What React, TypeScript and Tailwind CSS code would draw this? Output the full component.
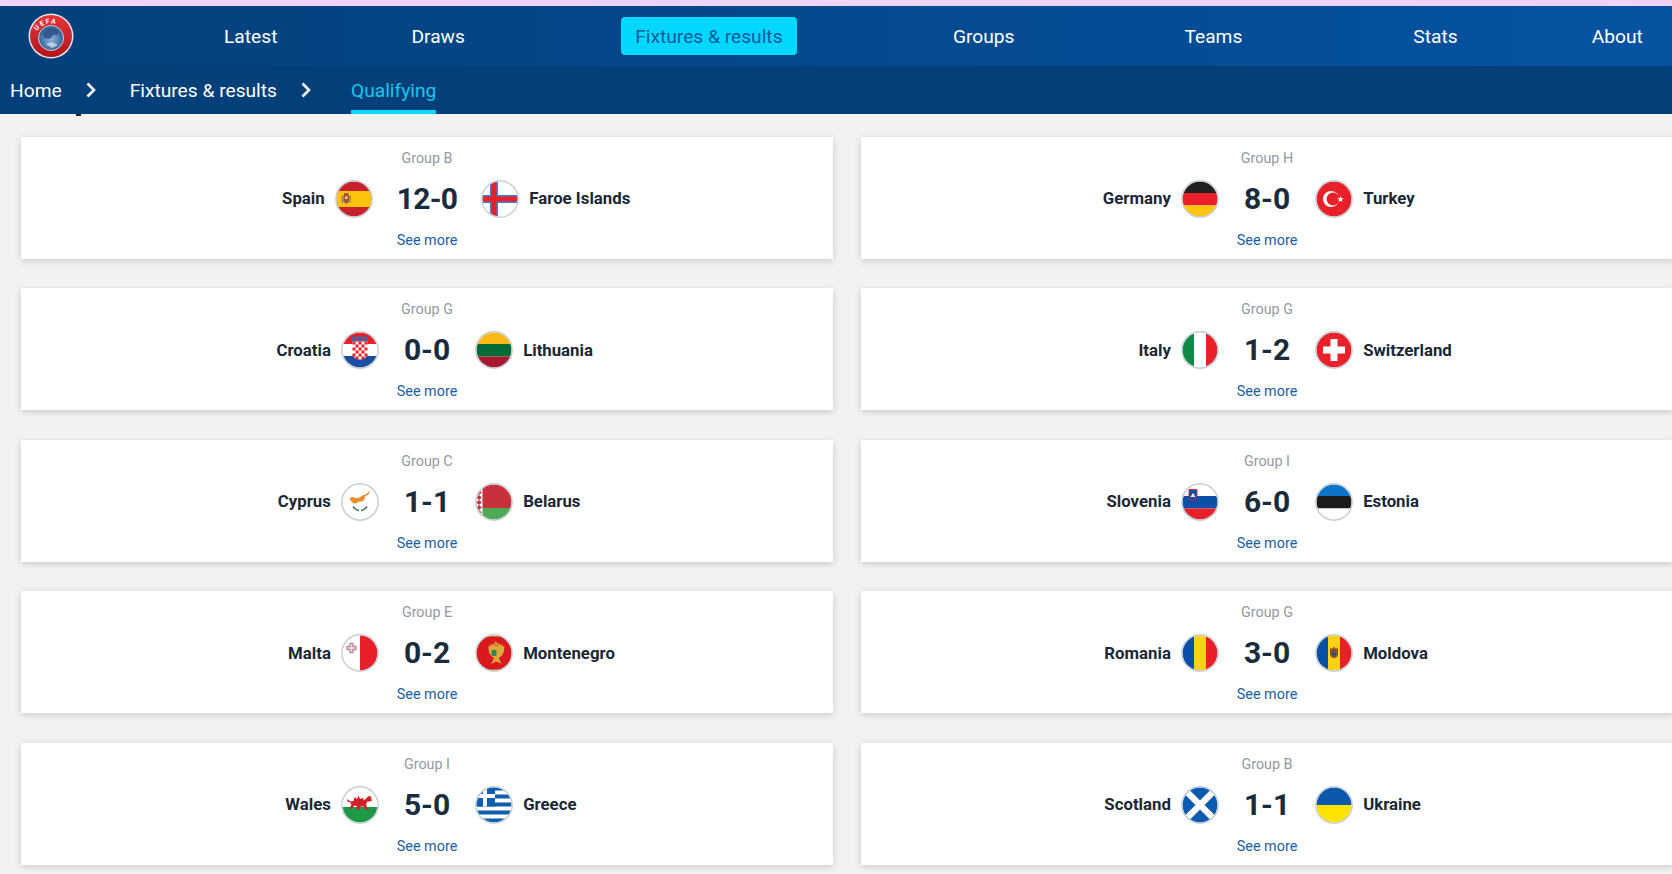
import React from "react";

const RED = "#e8202a";

function Flag({ id, children, ring = "#c6ced6" }: { id: string; children: React.ReactNode; ring?: string }) {
  return (
    <svg width="38" height="38" viewBox="0 0 38 38" className="shrink-0 block">
      <defs>
        <clipPath id={id}>
          <circle cx="19" cy="19" r="17.5" />
        </clipPath>
      </defs>
      <circle cx="19" cy="19" r="18.5" fill="#fff" />
      <g clipPath={`url(#${id})`}>{children}</g>
      <circle cx="19" cy="19" r="18.2" fill="none" stroke={ring} strokeWidth="1.4" />
    </svg>
  );
}

function R({ x, y, w, h, f }: { x: number; y: number; w: number; h: number; f: string }) {
  return <rect x={x} y={y} width={w} height={h} fill={f} />;
}

const flags: Record<string, React.ReactNode> = {
  Spain: (
    <>
      <R x={0} y={0} w={38} h={38} f="#c8202c" />
      <R x={0} y={11} w={38} h={16} f="#fcc30b" />
      <rect x="8.5" y="15" width="5.5" height="7" rx="1" fill="#a8502c" />
      <rect x="10" y="16.5" width="2.5" height="2.5" fill="#e8d9a0" />
      <rect x="6.8" y="15.5" width="1.2" height="7.5" fill="#8a7a60" />
      <rect x="14.5" y="15.5" width="1.2" height="7.5" fill="#8a7a60" />
      <rect x="9" y="13" width="4.5" height="2" fill="#b0602a" />
      <rect x="9.5" y="22" width="3.5" height="1.5" fill="#8a6a50" />
    </>
  ),
  "Faroe Islands": (
    <>
      <R x={0} y={0} w={38} h={38} f="#fff" />
      <R x={9} y={0} w={8} h={38} f="#3d7fd0" />
      <R x={0} y={15} w={38} h={8} f="#3d7fd0" />
      <R x={10.5} y={0} w={5} h={38} f={RED} />
      <R x={0} y={16.5} w={38} h={5} f={RED} />
    </>
  ),
  Germany: (
    <>
      <R x={0} y={0} w={38} h={13} f="#231f20" />
      <R x={0} y={13} w={38} h={12.5} f={RED} />
      <R x={0} y={25.5} w={38} h={13} f="#ffc60b" />
    </>
  ),
  Turkey: (
    <>
      <R x={0} y={0} w={38} h={38} f={RED} />
      <circle cx="16" cy="19" r="8" fill="#fff" />
      <circle cx="18" cy="19" r="6.4" fill={RED} />
      <polygon
        points="25.5,15.8 26.3,18.2 28.8,18.2 26.8,19.7 27.5,22.1 25.5,20.7 23.5,22.1 24.2,19.7 22.2,18.2 24.7,18.2"
        fill="#fff"
      />
    </>
  ),
  Croatia: (
    <>
      <R x={0} y={0} w={38} h={13} f={RED} />
      <R x={0} y={13} w={38} h={12} f="#fff" />
      <R x={0} y={25} w={38} h={13} f="#1b4ea3" />
      <rect x="11" y="5.5" width="16" height="5" fill="#3a64b0" />
      <rect x="14" y="6.5" width="3" height="3" fill="#b83a3a" />
      <rect x="21" y="6.5" width="3" height="3" fill="#b83a3a" />
      <path d="M11.5 10.5h15v12a7.5 6 0 0 1-15 0z" fill="#fff" />
      {[0, 1, 2, 3, 4, 5].map((r) =>
        [0, 1, 2, 3, 4].map((c) =>
          (r + c) % 2 === 0 ? (
            <rect
              key={`${r}-${c}`}
              x={11.5 + c * 3}
              y={10.5 + r * 3}
              width={3}
              height={3}
              fill={r === 5 && (c === 0 || c === 4) ? "#fff" : RED}
            />
          ) : null
        )
      )}
    </>
  ),
  Lithuania: (
    <>
      <R x={0} y={0} w={38} h={13} f="#fdb913" />
      <R x={0} y={13} w={38} h={12.5} f="#046a38" />
      <R x={0} y={25.5} w={38} h={13} f="#a6192e" />
    </>
  ),
  Italy: (
    <>
      <R x={0} y={0} w={13} h={38} f="#0f8a46" />
      <R x={13} y={0} w={12} h={38} f="#fff" />
      <R x={25} y={0} w={13} h={38} f={RED} />
    </>
  ),
  Switzerland: (
    <>
      <R x={0} y={0} w={38} h={38} f={RED} />
      <R x={15.5} y={8} w={7} h={22} f="#fff" />
      <R x={8} y={15.5} w={22} h={7} f="#fff" />
    </>
  ),
  Cyprus: (
    <>
      <R x={0} y={0} w={38} h={38} f="#fff" />
      <path
        d="M8.5 15l3.5-1 3 1.2 4-1 2.2-1.6 3.3-1.2 5-3.8-2.4 4.1-3 1.6-.5 3-2.5 2.2-3.5.2-2 1.6-3 .2-2.8-2.5z"
        fill="#ea8f2e"
      />
      <path d="M12 23.5c2 3 4 3.8 6 4M26 23.5c-2 3-4 3.8-6 4" stroke="#5d8a5f" strokeWidth="1.8" fill="none" />
    </>
  ),
  Belarus: (
    <>
      <R x={0} y={0} w={38} h={25} f="#c8303c" />
      <R x={0} y={25} w={38} h={13} f="#4faa58" />
      <R x={0} y={0} w={7.5} h={38} f="#fff" />
      {[2, 7, 12, 17, 22, 27, 32].map((y) => (
        <polygon key={y} points={`4,${y} 6.8,${y + 2.5} 4,${y + 5} 1.2,${y + 2.5}`} fill="#c8303c" />
      ))}
    </>
  ),
  Slovenia: (
    <>
      <R x={0} y={0} w={38} h={13} f="#fff" />
      <R x={0} y={13} w={38} h={12.5} f="#0a50a8" />
      <R x={0} y={25.5} w={38} h={13} f={RED} />
      <path d="M8 6.5h8v6.5c0 2.6-2.2 4-4 5-1.8-1-4-2.4-4-5z" fill="#0a50a8" stroke={RED} strokeWidth="0.9" />
      <path d="M9.5 14l2.5-4 2.5 4z" fill="#fff" />
    </>
  ),
  Estonia: (
    <>
      <R x={0} y={0} w={38} h={13} f="#0a75c9" />
      <R x={0} y={13} w={38} h={12.5} f="#1c1c1e" />
      <R x={0} y={25.5} w={38} h={13} f="#fff" />
    </>
  ),
  Malta: (
    <>
      <R x={0} y={0} w={19} h={38} f="#fff" />
      <R x={19} y={0} w={19} h={38} f={RED} />
      <path d="M9 9.5h3v3h3v3h-3v3H9v-3H6v-3h3z" fill="#ecdfe2" stroke="#b98a92" strokeWidth="1.3" />
    </>
  ),
  Montenegro: (
    <>
      <R x={0} y={0} w={38} h={38} f="#d4af37" />
      <R x={0} y={2.5} w={38} h={33} f="#d9191f" />
      <path
        d="M19 6.5l1.4 2.5-.8 2 1.4 1.2 3.2-3.2 1 2.4 2-1.6.6 2.6 1.7-.6-.6 6-2 4-3 2 1 3 2 3-3-1-1-1h-3l-1 1-3 1 2-3 1-3-3-2-2-4-.6-6 1.7.6.6-2.6 2 1.6 1-2.4 3.2 3.2 1.4-1.2-.8-2z"
        fill="#dba93a"
      />
      <rect x="16.5" y="16" width="5" height="6" rx="1" fill="#3b7d5a" />
    </>
  ),
  Romania: (
    <>
      <R x={0} y={0} w={13} h={38} f="#0a4fa6" />
      <R x={13} y={0} w={12} h={38} f="#fcd116" />
      <R x={25} y={0} w={13} h={38} f={RED} />
    </>
  ),
  Moldova: (
    <>
      <R x={0} y={0} w={13} h={38} f="#0a4fa6" />
      <R x={13} y={0} w={12} h={38} f="#fcd116" />
      <R x={25} y={0} w={13} h={38} f={RED} />
      <path d="M15 13.5l2 1.5 2-2.5 2 2.5 2-1.5v7c0 2.2-2 3.2-4 4-2-.8-4-1.8-4-4z" fill="#7a5a2b" />
      <rect x="17" y="15.5" width="4" height="3" fill="#b8332f" />
      <rect x="17" y="18.5" width="4" height="3" fill="#2a4f9c" />
    </>
  ),
  Wales: (
    <>
      <R x={0} y={0} w={38} h={21} f="#fff" />
      <R x={0} y={21} w={38} h={17} f="#1c9a46" />
      <path
        d="M6 13l3.5 2.5 3-.5 1-4 2.5 2 1.5-3.5 1.5 3.5 3-1 1 2.5 3-3 2-1.5 2.5.8-.5 2 1.5 1.5-3 1.5-2-.5-1.5 3.5 1.5 3.5 2 1.5h-4l-2-3.5-3 .5-1 3h-3.5l1.5-3-3-1.2-2.5 3-3 .2 2.5-4-1.5-2.5-2.5-.5z"
        fill="#d2202a"
      />
    </>
  ),
  Greece: (
    <>
      <R x={0} y={0} w={38} h={38} f="#fff" />
      {[0, 8, 16, 24, 32].map((y) => (
        <R key={y} x={0} y={y + 0.5} w={38} h={4} f="#0d5eaf" />
      ))}
      <R x={0} y={0} w={20} h={20.5} f="#0d5eaf" />
      <R x={8} y={0} w={4} h={20.5} f="#fff" />
      <R x={0} y={8} w={20} h={4} f="#fff" />
    </>
  ),
  Scotland: (
    <>
      <R x={0} y={0} w={38} h={38} f="#0b5cb0" />
      <path d="M4 4l30 30M34 4L4 34" stroke="#fff" strokeWidth="6.5" />
    </>
  ),
  Ukraine: (
    <>
      <R x={0} y={0} w={38} h={19} f="#0a57ab" />
      <R x={0} y={19} w={38} h={19} f="#fde300" />
    </>
  ),
};

type Match = { g: string; h: string; s: string; a: string };

const left: Match[] = [
  { g: "Group B", h: "Spain", s: "12-0", a: "Faroe Islands" },
  { g: "Group G", h: "Croatia", s: "0-0", a: "Lithuania" },
  { g: "Group C", h: "Cyprus", s: "1-1", a: "Belarus" },
  { g: "Group E", h: "Malta", s: "0-2", a: "Montenegro" },
  { g: "Group I", h: "Wales", s: "5-0", a: "Greece" },
];
const right: Match[] = [
  { g: "Group H", h: "Germany", s: "8-0", a: "Turkey" },
  { g: "Group G", h: "Italy", s: "1-2", a: "Switzerland" },
  { g: "Group I", h: "Slovenia", s: "6-0", a: "Estonia" },
  { g: "Group G", h: "Romania", s: "3-0", a: "Moldova" },
  { g: "Group B", h: "Scotland", s: "1-1", a: "Ukraine" },
];

function Card({ m }: { m: Match }) {
  const wide = m.s === "12-0";
  return (
    <div className="h-[122px] bg-white shadow-[0_2px_7px_rgba(0,0,0,0.16)] flex flex-col items-center">
      <div className="mt-[12px] h-[19px] leading-[19px] text-[14.3px] text-[#8f9aa3]">{m.g}</div>
      <div className="mt-[11px] h-[40px] w-full flex items-center">
        <div className="flex-1 flex justify-end items-center gap-[10px]">
          <span className="text-[16.8px] font-bold text-[#1a2733]">{m.h}</span>
          <Flag id={`h-${m.h.replace(/\s/g, "")}`}>{flags[m.h]}</Flag>
        </div>
        <div
          className={
            wide
              ? "mx-[24px] tracking-[-0.7px] text-[30px] leading-[40px] font-bold text-[#1a2b3c]"
              : "mx-[25px] text-[30px] leading-[40px] font-bold text-[#1a2b3c]"
          }
        >
          {m.s}
        </div>
        <div className="flex-1 flex items-center gap-[10px]">
          <Flag id={`a-${m.a.replace(/\s/g, "")}`}>{flags[m.a]}</Flag>
          <span className="text-[16.8px] font-bold text-[#1a2733]">{m.a}</span>
        </div>
      </div>
      <a className="mt-[12px] h-[19px] leading-[19px] text-[14.4px] text-[#1560a8]">See more</a>
    </div>
  );
}

function Chevron() {
  return (
    <svg width="14" height="18" viewBox="0 0 14 18" className="shrink-0">
      <path d="M3.5 2.5L10 9l-6.5 6.5" fill="none" stroke="#fff" strokeWidth="2.6" />
    </svg>
  );
}

function Logo() {
  return (
    <svg width="46" height="48" viewBox="0 0 46 48" className="shrink-0">
      <defs>
        <path id="uefa-arc" d="M7 24a16.5 16.5 0 0 1 32 0" />
        <radialGradient id="globe" cx="50%" cy="55%" r="55%">
          <stop offset="0%" stopColor="#8fb6dc" />
          <stop offset="100%" stopColor="#23588f" />
        </radialGradient>
        <linearGradient id="ring" x1="0" y1="0" x2="0" y2="1">
          <stop offset="0%" stopColor="#e6353a" />
          <stop offset="100%" stopColor="#b3151d" />
        </linearGradient>
      </defs>
      <circle cx="23" cy="24" r="22.5" fill="#e4e6ea" />
      <circle cx="23" cy="24" r="21" fill="url(#ring)" />
      <circle cx="23" cy="26" r="12.5" fill="url(#globe)" stroke="#c9d3dc" strokeWidth="1" />
      <path d="M15 21l6-5 7 1 3 5-6 1-3 4-6-1z" fill="#2f4f86" opacity="0.85" />
      <path d="M18 32l6-2 6 3-6 3z" fill="#d5e3f0" opacity="0.75" />
      <text fontFamily="Roboto, sans-serif" fontSize="7" fontWeight="700" fill="#fff" letterSpacing="1.5">
        <textPath href="#uefa-arc" startOffset="12%">UEFA</textPath>
      </text>
    </svg>
  );
}

export default function App() {
  return (
    <div
      className="w-[1672px] h-[874px] overflow-hidden bg-[#f3f2f1] relative"
      style={{ fontFamily: "Roboto, sans-serif" }}
    >
      <div className="h-[6px] bg-[#f0d3fb]" />
      <div className="h-[60px] bg-gradient-to-r from-[#03407a] to-[#0553a1] flex items-center pl-[28px] text-[19.2px] text-white">
        <Logo />
        <span className="ml-[150px] pt-[2px]">Latest</span>
        <span className="ml-[134px] pt-[2px]">Draws</span>
        <span className="ml-[156px] h-[38px] w-[176px] rounded-[4px] bg-[#00d7ff] text-[#0b5a9c] flex items-center justify-center pt-[2px]">
          Fixtures &amp; results
        </span>
        <span className="ml-[156px] pt-[2px]">Groups</span>
        <span className="ml-[170px] pt-[2px]">Teams</span>
        <span className="ml-[171px] pt-[2px]">Stats</span>
        <span className="ml-[134px] pt-[2px]">About</span>
      </div>
      <div className="h-[48px] bg-[#03407a] flex items-stretch pl-[10px] text-[19.2px] text-white">
        <span className="flex items-center pt-[2px]">Home</span>
        <span className="flex items-center ml-[22px]"><Chevron /></span>
        <span className="flex items-center ml-[32px] pt-[2px]">Fixtures &amp; results</span>
        <span className="flex items-center ml-[22px]"><Chevron /></span>
        <span className="flex items-center ml-[38px] text-[#1cc6ee] border-b-[4px] border-[#00d7ff] pt-[6px]">Qualifying</span>
      </div>
      <div className="h-[23px] pl-[76px]">
        <div className="w-[5px] h-[2px] bg-[#1a2733]" />
      </div>
      <div className="grid grid-cols-[812px_812px] gap-x-[28px] pl-[21px]">
        <div className="flex flex-col gap-y-[29.4px]">
          {left.map((m) => <Card key={m.h} m={m} />)}
        </div>
        <div className="flex flex-col gap-y-[29.4px]">
          {right.map((m) => <Card key={m.h} m={m} />)}
        </div>
      </div>
    </div>
  );
}
